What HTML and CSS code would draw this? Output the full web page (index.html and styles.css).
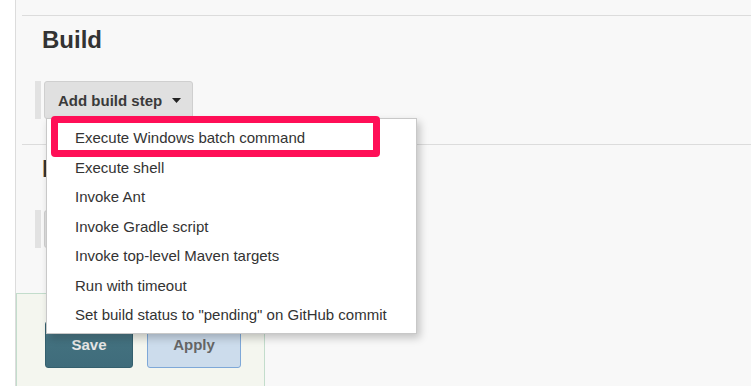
FILE: index.html
```html
<!DOCTYPE html>
<html>
<head>
<meta charset="utf-8">
<link rel="stylesheet" href="styles.css">
</head>
<body>
<div class="page">
  <div class="section">
    <h2 class="heading">Build</h2>
    <div class="step-row">
      <span class="grip"></span>
      <button class="add-btn">Add build step <svg class="caret" width="9" height="5" viewBox="0 0 9 5"><polygon points="0,0 9,0 4.5,5" fill="#222"/></svg></button>
    </div>
  </div>
  <div class="section">
    <h2 class="heading">Post-build Actions</h2>
    <div class="step-row">
      <span class="grip"></span>
      <button class="add-btn">Add post-build action <svg class="caret" width="9" height="5" viewBox="0 0 9 5"><polygon points="0,0 9,0 4.5,5" fill="#222"/></svg></button>
    </div>
  </div>
  <div class="bottom-panel">
    <button class="btn save">Save</button>
    <button class="btn apply">Apply</button>
  </div>
</div>

<ul class="menu">
  <li>Execute Windows batch command</li>
  <li>Execute shell</li>
  <li>Invoke Ant</li>
  <li>Invoke Gradle script</li>
  <li>Invoke top-level Maven targets</li>
  <li>Run with timeout</li>
  <li>Set build status to "pending" on GitHub commit</li>
</ul>
<div class="highlight"></div>
</body>
</html>
```
FILE: styles.css
```css
html, body {
  margin: 0;
  padding: 0;
  background: #ffffff;
  height: 386px;
  overflow: hidden;
  font-family: "Liberation Sans", Arial, sans-serif;
  color: #333;
}

.page {
  margin-left: 15px;
  border-left: 1px solid #dcdcdc;
  background: #f8f8f8;
  height: 386px;
  padding-top: 15px;
  box-sizing: border-box;
  overflow: hidden;
}

.section {
  margin-left: 6px;
  border-top: 1px solid #dcdcdc;
}

.heading {
  margin: 10px 0 0 20px;
  font-size: 24px;
  line-height: 28px;
  font-weight: bold;
  color: #333;
  white-space: nowrap;
}

.step-row {
  display: flex;
  align-items: stretch;
  gap: 3px;
  margin: 27px 0 25px 13px;
  height: 38px;
}

.grip {
  width: 6px;
  background: #e2e2e2;
}

.add-btn {
  display: flex;
  align-items: center;
  gap: 10px;
  height: 38px;
  padding: 0 11px 0 13px;
  margin: 0;
  background: #e0e0e0;
  border: 1px solid #cfcfcf;
  border-radius: 3px;
  font-family: "Liberation Sans", Arial, sans-serif;
  font-weight: bold;
  font-size: 15px;
  color: #3a3a3a;
  white-space: nowrap;
}

.caret {
  display: block;
  margin-top: 1px;
}

.bottom-panel {
  margin-top: 45px;
  width: 249px;
  height: 93px;
  box-sizing: border-box;
  background: #f4f6ef;
  border: 1px solid #c3ddcc;
  border-bottom: none;
  padding: 27px 0 0 28px;
  display: flex;
  align-items: flex-start;
  gap: 14px;
}

.btn {
  height: 47px;
  margin: 0;
  border-radius: 3px;
  font-family: "Liberation Sans", Arial, sans-serif;
  font-weight: bold;
  font-size: 15px;
  padding: 0;
}

.save {
  width: 88px;
  background: linear-gradient(#5c8595, #43717f 40%, #3f6c7b);
  border: 1px solid #34606e;
  color: #e6e6e6;
}

.apply {
  width: 94px;
  background: #ccdcec;
  border: 1px solid #7ea8d8;
  color: #666;
}

.menu {
  position: absolute;
  left: 46px;
  top: 118px;
  width: 371px;
  box-sizing: border-box;
  margin: 0;
  padding: 4px 0 3px 0;
  list-style: none;
  background: #fff;
  border: 1px solid #c8c8c8;
  box-shadow: 3px 4px 8px rgba(0, 0, 0, 0.22);
}

.menu li {
  height: 29.5px;
  line-height: 29.5px;
  padding-left: 28px;
  font-size: 15px;
  color: #333;
  white-space: nowrap;
}

.highlight {
  position: absolute;
  left: 51px;
  top: 116px;
  width: 329px;
  height: 41px;
  box-sizing: border-box;
  border: 7px solid #ff0f57;
  border-radius: 4px;
}
```
